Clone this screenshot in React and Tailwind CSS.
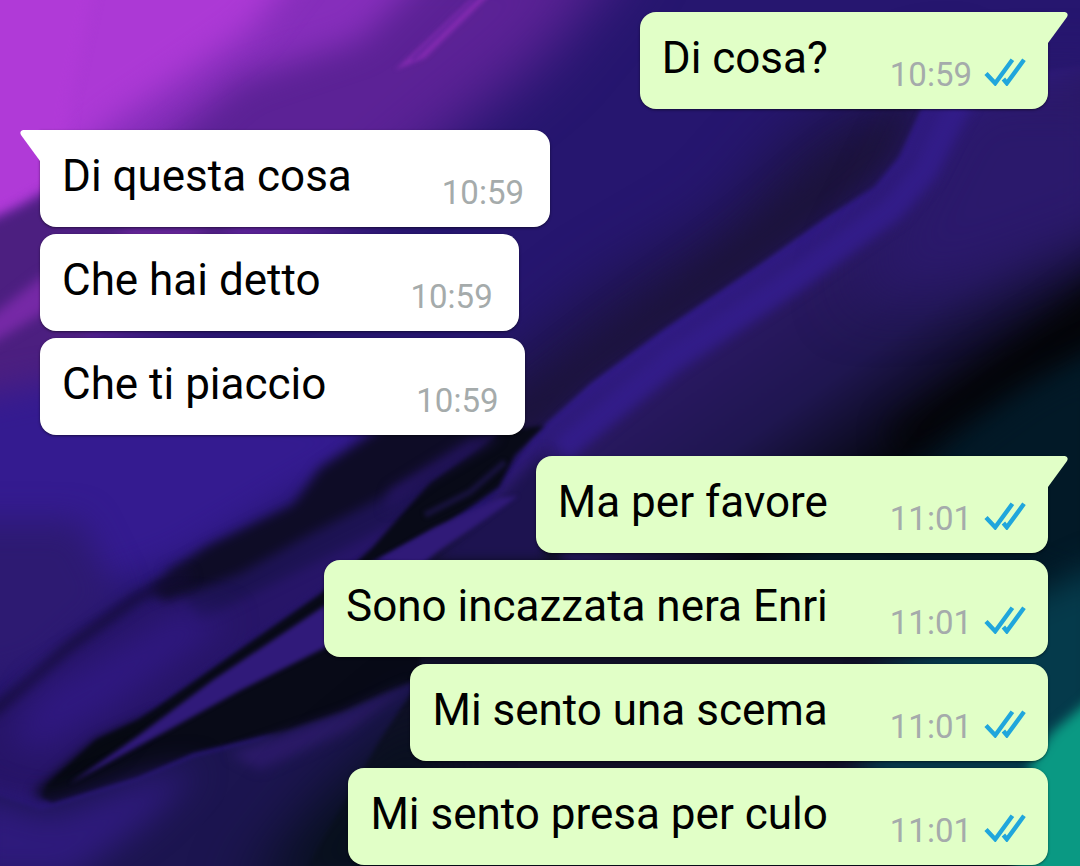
const groups = [
  {
    mine: true,
    messages: [{ text: 'Di cosa?', time: '10:59' }],
  },
  {
    mine: false,
    messages: [
      { text: 'Di questa cosa', time: '10:59' },
      { text: 'Che hai detto', time: '10:59' },
      { text: 'Che ti piaccio', time: '10:59' },
    ],
  },
  {
    mine: true,
    messages: [
      { text: 'Ma per favore', time: '11:01' },
      { text: 'Sono incazzata nera Enri', time: '11:01' },
      { text: 'Mi sento una scema', time: '11:01' },
      { text: 'Mi sento presa per culo', time: '11:01' },
    ],
  },
];

function Wallpaper() {
  return (
    <svg
      className="absolute inset-0 w-full h-full"
      viewBox="0 0 1080 866"
      preserveAspectRatio="xMidYMid slice"
      aria-hidden="true"
    >
      <defs>
        <filter id="blur2" x="-20%" y="-20%" width="140%" height="140%" colorInterpolationFilters="sRGB">
          <feGaussianBlur stdDeviation="2" />
        </filter>
        <filter id="blur6" x="-20%" y="-20%" width="140%" height="140%" colorInterpolationFilters="sRGB">
          <feGaussianBlur stdDeviation="6" />
        </filter>
        <filter id="blur14" x="-30%" y="-30%" width="160%" height="160%" colorInterpolationFilters="sRGB">
          <feGaussianBlur stdDeviation="16" />
        </filter>
        <filter id="blur30" x="-50%" y="-50%" width="200%" height="200%" colorInterpolationFilters="sRGB">
          <feGaussianBlur stdDeviation="30" />
        </filter>
        <linearGradient id="ridge" gradientUnits="userSpaceOnUse" x1="740" y1="275" x2="900" y2="500">
          <stop offset="0" stopColor="#311b88" />
          <stop offset="0.2" stopColor="#28185f" />
          <stop offset="0.5" stopColor="#1f1650" />
          <stop offset="0.85" stopColor="#060812" />
          <stop offset="1" stopColor="#021622" />
        </linearGradient>
      </defs>

      <rect width="1080" height="866" fill="#26166f" />

      {/* purple folds, top left */}
      <path d="M-60 -60H640L540 60 430 150 300 260 150 320 -60 460Z" fill="#5c2296" filter="url(#blur30)" />
      <path d="M-60 -60H460L360 40 240 80 120 180 -60 260Z" fill="#862ebb" filter="url(#blur14)" />
      <path d="M-60 -60H320L250 30 170 85 110 125 40 190 -60 232Z" fill="#ac39d5" filter="url(#blur14)" />
      <path d="M-40 -40H100L70 100 60 180 0 214 -40 226Z" fill="#b03ad7" filter="url(#blur6)" />
      <path d="M-40 236L20 208 60 185V225H240L130 300 90 330 40 420 -40 450Z" fill="#4c1f80" filter="url(#blur6)" />
      <path d="M-20 325L40 278 130 232H210L90 290 40 315 -20 350Z" fill="#7629a6" filter="url(#blur6)" />
      <path d="M495 -10L470 0 395 70 425 58Z" fill="#8f2eb8" fillOpacity="0.75" filter="url(#blur2)" />
      <path d="M478 -4L412 60" stroke="#5a2199" strokeWidth="3" filter="url(#blur2)" />

      {/* blue cloth on the left */}
      <path d="M-40 400L60 380 420 420 300 490 180 560 100 590 -40 570Z" fill="#341b90" filter="url(#blur14)" />
      <path d="M-40 520L80 520 120 600 40 670 -40 690Z" fill="#2d1a72" filter="url(#blur14)" />

      {/* shadow above the ridge */}
      <path d="M960 60L899 157 874 187 827 217 756 267 663 330 591 383 531 437 400 450 500 370 600 290 720 220 800 130Z" fill="#1d1444" filter="url(#blur30)" />
      <path d="M925 95L899 157 756 267 591 383 531 437 440 450 540 385 640 310 760 220 860 140Z" fill="#1b1338" filter="url(#blur14)" />
      <path
        d="M930 90L899 157 874 187 827 217 756 267 663 330 591 383 531 437 480 520 300 700 420 900H1120V60Z"
        fill="url(#ridge)"
        filter="url(#blur2)"
      />
      <path d="M960 80H1130V230L960 290 850 300 900 200Z" fill="#2b196c" filter="url(#blur30)" />
      <path d="M962 95L925 170 892 208 792 280 672 358 560 450" fill="none" stroke="#321c88" strokeWidth="26" filter="url(#blur6)" />
      <path d="M1130 260L1050 320 970 375 890 430 900 460 1000 400 1130 330Z" fill="#040509" filter="url(#blur14)" />
      <path d="M1110 350L1030 390 960 440 900 520 1110 600Z" fill="#021927" filter="url(#blur14)" />

      {/* creases, bottom left */}
      <path d="M-20 720L69 650 150 600 300 540 480 450 530 440 370 560 140 720 40 800 -20 790Z" fill="#271568" filter="url(#blur6)" />
      <path d="M165 570L320 500 470 440 400 520 200 620Z" fill="#1d1353" filter="url(#blur6)" />
      <path d="M400 415L320 468 293 505 207 547 150 588 165 602 241 573 310 534 396 490 480 447 510 420Z" fill="#0e0c26" filter="url(#blur6)" />
      <path d="M-10 714L30 682 69 647 138 597 190 575" fill="none" stroke="#130c35" strokeWidth="9" filter="url(#blur6)" />
      <path d="M40 690L180 612 230 620 110 710 40 750 10 740Z" fill="#2f1880" filter="url(#blur14)" />
      <path d="M560 500L440 530 400 620 330 650 180 870H1080V640H700L560 560Z" fill="#101027" filter="url(#blur6)" />
      <path d="M500 500L545 450V560H430Z" fill="#1d1350" filter="url(#blur6)" />
      <path d="M545 425L500 432 430 482 372 548 320 594 213 668 138 720 96 740 48 784 41 797 52 803 138 777 193 753 275 733 344 710 420 677 420 640 324 600 372 562 448 523 499 487 515 455Z" fill="#080a17" filter="url(#blur2)" />
      <path d="M96 740L160 712 120 760 40 800 34 792Z" fill="#060912" filter="url(#blur6)" />
      <path d="M378 560L434 528 499 498 518 496 470 530 420 564Z" fill="#301a78" filter="url(#blur2)" />
      <path d="M385 512L430 478 500 436 470 440 390 490Z" fill="#24145f" filter="url(#blur6)" />
      <path d="M425 515L470 492 505 462" fill="none" stroke="#17123c" strokeWidth="6" filter="url(#blur2)" />
      <path d="M69 784L138 736 213 680 330 602 340 640 241 690 172 728Z" fill="#301a7a" filter="url(#blur2)" />

      {/* lower cloth */}
      <path d="M-20 790L41 810 138 780 193 757 275 736 344 713 420 679 380 740 300 880H-20Z" fill="#1c1550" filter="url(#blur2)" />
      <path d="M230 754L344 714 415 682 350 730 260 770Z" fill="#2b1a68" filter="url(#blur6)" />
      <path d="M-30 790L50 815 140 782 200 768 150 820 70 880H-30Z" fill="#2e1a7c" filter="url(#blur14)" />
      <path d="M240 900L320 800 440 700 460 900Z" fill="#07101d" filter="url(#blur30)" />

      {/* teal, bottom right */}
      <path d="M1110 560L1000 610 880 670 860 790H1110Z" fill="#053a4b" filter="url(#blur14)" />
      <path d="M1110 680L1080 708 1052 732 1030 765 1010 890H1110Z" fill="#0a9983" filter="url(#blur6)" />
    </svg>
  );
}

function ReadTicks() {
  return (
    <svg className="w-[42px] h-[28px] mb-[9px] ml-3" viewBox="0 0 42 28" role="img" aria-label="Letto">
      <path
        d="M2 15.5L11.2 25.2 28.4 1.8M19.4 21L22.8 25.2 40 1.8"
        fill="none"
        stroke="#20a6dc"
        strokeWidth="4.4"
      />
    </svg>
  );
}

function Tail({ mine }) {
  return mine ? (
    <svg className="absolute top-0 left-full w-5 h-[31px]" viewBox="0 0 20 31" aria-hidden="true">
      <path d="M0 0H17Q21 1 19 5L0 31Z" fill="#e1ffc7" />
    </svg>
  ) : (
    <svg className="absolute top-0 right-full w-5 h-[31px]" viewBox="0 0 20 31" aria-hidden="true">
      <path d="M20 0H3Q-1 1 1 5L20 31Z" fill="#ffffff" />
    </svg>
  );
}

function Bubble({ text, time, mine, first }) {
  const side = mine ? 'self-end bg-[#e1ffc7]' : 'self-start bg-white';
  const corner = first ? (mine ? 'rounded-tr-none' : 'rounded-tl-none') : '';

  return (
    <li className={`relative flex items-end rounded-2xl px-[22px] pt-5 pb-[14px] shadow-sm shadow-black/40 ${side} ${corner}`}>
      {first && <Tail mine={mine} />}
      <p className="text-[44px] leading-[52px] mb-[11px] text-black">{text}</p>
      <time className={`text-[33px] leading-10 text-[#a5abab] ${mine ? 'ml-[62px]' : 'ml-[90px] mr-1'}`}>
        {time}
      </time>
      {mine && <ReadTicks />}
    </li>
  );
}

export default function App() {
  return (
    <main className="relative min-h-screen overflow-hidden bg-[#26166f] font-['Roboto',sans-serif]">
      <Wallpaper />
      <div className="relative flex flex-col gap-[21px] pt-3 pl-10 pr-8">
        {groups.map((group, i) => (
          <ul key={i} className="flex flex-col gap-[7px]">
            {group.messages.map((message, j) => (
              <Bubble key={message.text} {...message} mine={group.mine} first={j === 0} />
            ))}
          </ul>
        ))}
      </div>
    </main>
  );
}
